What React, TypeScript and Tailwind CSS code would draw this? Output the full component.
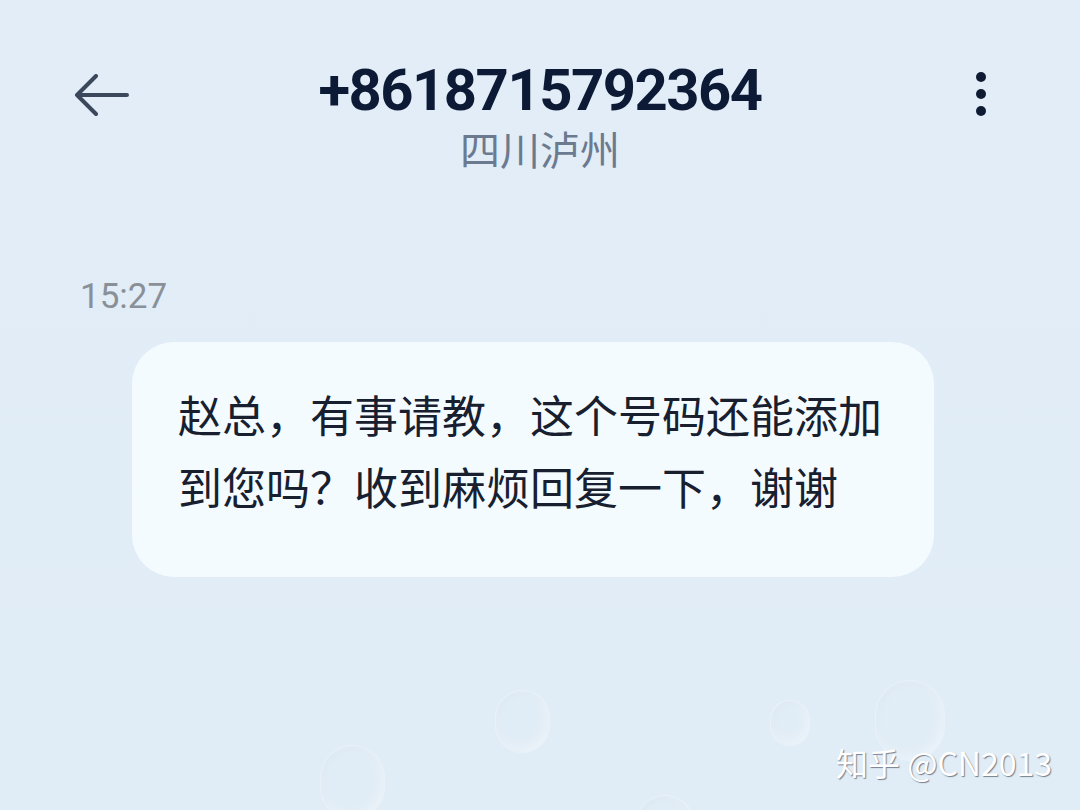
import React from "react";

const cjk = "font-['Roboto','Noto_Sans_CJK_SC',sans-serif]";

function Drop({ x, y, s }: { x: number; y: number; s: number }) {
  return (
    <div
      className="absolute rounded-full border border-white/25 bg-white/5 shadow-[inset_-3px_-4px_8px_rgba(255,255,255,0.35),inset_2px_3px_6px_rgba(150,170,190,0.06)]"
      style={{ left: x, top: y, width: s, height: s * 1.15 }}
    />
  );
}

export default function App() {
  return (
    <div className={`relative w-[1080px] h-[810px] overflow-hidden bg-gradient-to-b from-[#e2edf8] to-[#e0ecf6] ${cjk}`}>
      {/* droplets in wallpaper */}
      <Drop x={495} y={690} s={55} />
      <Drop x={320} y={745} s={65} />
      <Drop x={875} y={680} s={70} />
      <Drop x={770} y={700} s={40} />
      <Drop x={635} y={795} s={60} />

      {/* header */}
      <div className="grid grid-cols-[1fr_auto_1fr] items-start pt-[58px]">
        <div className="pl-[74px] pt-[16px]">
          <svg width="56" height="44" viewBox="0 0 56 44" fill="none">
            <path d="M53 21H3M22 2L3 21l19 19" stroke="#3b475a" strokeWidth="4" strokeLinecap="round" strokeLinejoin="round" />
          </svg>
        </div>
        <div className="flex flex-col items-center">
          <div className="text-[58px] leading-[64px] font-bold tracking-[-1.5px] text-[#0d1a35]">+8618715792364</div>
          <div className="text-[40px] leading-[48px] mt-[6px] font-normal text-[#6c7a8f]">四川泸州</div>
        </div>
        <div className="flex justify-end pr-[94px] pt-[14px]">
          <div className="flex flex-col gap-[7px]">
            <span className="w-[10px] h-[10px] rounded-full bg-[#0f1b33]" />
            <span className="w-[10px] h-[10px] rounded-full bg-[#0f1b33]" />
            <span className="w-[10px] h-[10px] rounded-full bg-[#0f1b33]" />
          </div>
        </div>
      </div>

      {/* messages */}
      <div className="pl-[80px] pt-[101px] text-[35px] leading-[40px] text-[#8a9097]">15:27</div>
      <div className="ml-[132px] mt-[25px] w-[802px] rounded-[42px] bg-[#f3fbfe] pl-[46px] pr-[30px] pt-[40px] pb-[51px] text-[44px] leading-[72px] text-[#18202f]">
        赵总，有事请教，这个号码还能添加
        <br />
        到您吗？收到麻烦回复一下，谢谢
      </div>

      {/* watermark */}
      <div className="absolute left-[836px] top-[742px] text-[32px] leading-[40px] text-white [text-shadow:1px_1px_1px_rgba(90,100,115,0.8)] font-['Noto_Sans_CJK_SC',sans-serif]">
        知乎 @CN2013
      </div>
    </div>
  );
}
